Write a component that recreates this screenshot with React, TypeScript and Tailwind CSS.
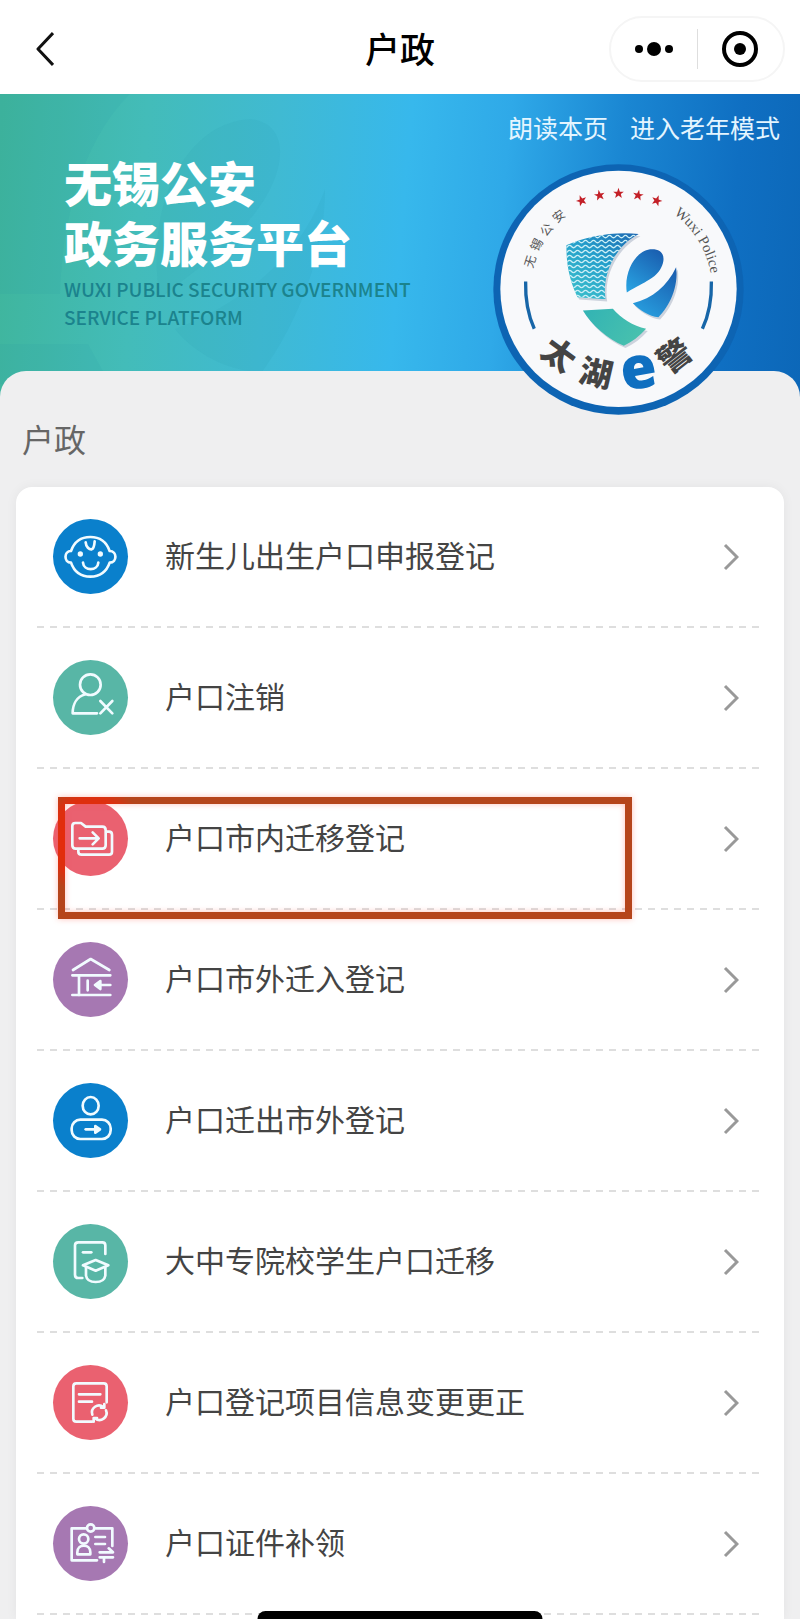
import type { ReactNode } from "react";

type Service = {
  label: string;
  color: string;
  icon: ReactNode;
  marked?: boolean;
};

const SERVICES: Service[] = [
  {
    label: "新生儿出生户口申报登记",
    color: "bg-[#0a80cc]",
    icon: (
      <>
        <path d="M54 96C64 68 84 54 112 54S160 68 170 96C193 96 193 131 170 131C160 160 138 173 112 173S64 160 54 131C32 131 32 96 54 96Z" />
        <path d="M98 70C99 84 109 92 116 91C122 89 124 80 125 67" />
        <path d="M90 131C92 157 134 157 136 131" />
        <circle cx="82" cy="105" r="4" fill="currentColor" />
        <circle cx="142" cy="105" r="4" fill="currentColor" />
      </>
    ),
  },
  {
    label: "户口注销",
    color: "bg-[#58b6a6]",
    icon: (
      <>
        <circle cx="112" cy="74" r="31" />
        <path d="M97 103C72 110 59 132 59 160H132" />
        <path d="M142 123L178 160M178 123L142 160" />
      </>
    ),
  },
  {
    label: "户口市内迁移登记",
    color: "bg-[#ea6170]",
    marked: true,
    icon: (
      <>
        <path d="M67 66H84L98 77H148Q158 77 158 88V133Q158 143 148 143H68Q58 143 58 133V75Q58 66 67 66Z" />
        <path d="M80 112H136M119 94L137 112L119 130" />
        <path d="M160 92H168Q177 92 177 101V152Q177 161 168 161H86Q76 161 76 152V146" />
      </>
    ),
  },
  {
    label: "户口市外迁入登记",
    color: "bg-[#a678b2]",
    icon: (
      <>
        <path d="M60 84L113 51L169 84M58 100H172M58 159H172" />
        <path d="M78 100V159M104 116V145M172 129H130" />
        <path d="M142 117L126 129L142 141Z" fill="currentColor" />
      </>
    ),
  },
  {
    label: "户口迁出市外登记",
    color: "bg-[#0a80cc]",
    icon: (
      <>
        <ellipse cx="113" cy="68" rx="24" ry="26" />
        <rect x="56" y="110" width="117" height="58" rx="26" />
        <path d="M98 139H130" />
        <path d="M127 129L141 139L127 149Z" fill="currentColor" />
      </>
    ),
  },
  {
    label: "大中专院校学生户口迁移",
    color: "bg-[#58b6a6]",
    icon: (
      <>
        <path d="M88 162H76Q66 162 66 152V64Q66 55 76 55H148Q157 55 157 64V90" />
        <path d="M90 85H115" />
        <path d="M90 124L128 108L166 124L128 140Z" />
        <path d="M99 130V155Q102 174 128 174T157 155V130" />
      </>
    ),
  },
  {
    label: "户口登记项目信息变更更正",
    color: "bg-[#ea6170]",
    icon: (
      <>
        <path d="M117 170H70Q61 170 61 161V64Q61 55 70 55H152Q161 55 161 64V112" />
        <path d="M78 88H142M78 110H117" />
        <path d="M118 149A21 21 0 0 1 151 126M159 136A21 21 0 0 1 126 160" />
        <path d="M154 117V128H144M122 170V159H132" />
      </>
    ),
  },
  {
    label: "户口证件补领",
    color: "bg-[#a678b2]",
    icon: (
      <>
        <path d="M132 163H56V67H98M128 67H178V120" />
        <circle cx="113" cy="66" r="11" />
        <circle cx="92" cy="99" r="14" />
        <path d="M73 145V139C73 112 112 112 112 139V145Z" />
        <path d="M127 93H156M127 114H156" />
        <path d="M140 139H180L167 127M180 154H140M153 154V168" />
      </>
    ),
  },
];

const STARS = [
  { x: 336, y: 332, r: -20 },
  { x: 390, y: 316, r: -10 },
  { x: 447, y: 310, r: 0 },
  { x: 506, y: 316, r: 10 },
  { x: 562, y: 332, r: 20 },
];

const SEAL_CHARS = [
  { char: "无", x: 183, y: 515, r: -72 },
  { char: "锡", x: 202, y: 465, r: -61 },
  { char: "公", x: 232, y: 420, r: -50 },
  { char: "安", x: 268, y: 380, r: -39 },
];

const WAVES = Array.from({ length: 13 }, (_, i) => 440 + i * 15);

function wavePath(y: number) {
  let d = `M270 ${y}`;
  for (let i = 0; i < 11; i++) d += "q6 -7 12 0t12 0";
  return d;
}

function Seal() {
  return (
    <svg viewBox="70 222 754 754" className="h-[251px] w-[251px]" role="img" aria-label="太湖e警">
      <defs>
        <linearGradient id="shield" x1="1" y1="0" x2="0.2" y2="1">
          <stop offset="0" stopColor="#1c5fae" />
          <stop offset="0.5" stopColor="#249fcb" />
          <stop offset="1" stopColor="#3cc0cc" />
        </linearGradient>
        <linearGradient id="bowl" x1="0.8" y1="0" x2="0.2" y2="1">
          <stop offset="0" stopColor="#1a5fb0" />
          <stop offset="1" stopColor="#28a0e0" />
        </linearGradient>
        <linearGradient id="tip" x1="0" y1="0" x2="1" y2="0.4">
          <stop offset="0" stopColor="#32b3b4" />
          <stop offset="1" stopColor="#47c0ae" />
        </linearGradient>
        <clipPath id="shieldClip">
          <path d="M290 466C350 440 430 424 508 432C440 466 396 550 408 628L324 622C303 580 290 530 290 466Z" />
        </clipPath>
        <path id="arc" d="M166 599A281 281 0 0 1 728 599" />
      </defs>

      <circle cx="447" cy="599" r="376" fill="#0d64b3" />
      <circle cx="447" cy="597" r="355" fill="#f8f9fb" />

      {STARS.map((s) => (
        <path
          key={s.x}
          transform={`translate(${s.x} ${s.y}) rotate(${s.r})`}
          d="M0 -17L4 -5H16L7 2L10 14L0 7L-10 14L-7 2L-16 -5H-4Z"
          fill="#c32027"
        />
      ))}

      {SEAL_CHARS.map((c) => (
        <text
          key={c.char}
          transform={`translate(${c.x} ${c.y}) rotate(${c.r})`}
          textAnchor="middle"
          y="12"
          fontSize="37"
          fill="#555"
          className="font-['Noto_Sans_CJK_SC',sans-serif]"
        >
          {c.char}
        </text>
      ))}
      <text fontSize="44" fill="#555" className="font-['Liberation_Serif',serif]">
        <textPath href="#arc" startOffset="70%">
          Wuxi Police
        </textPath>
      </text>

      <path d="M168 575Q166 655 194 717M726 575Q728 655 699 717" fill="none" stroke="#1766a8" strokeWidth="10" />

      <g fill="#cdd3dd" transform="translate(5 7)">
        <path d="M290 466C350 440 430 424 508 432C440 466 396 550 408 628L324 622C303 580 290 530 290 466Z" />
        <path d="M490 640C550 625 592 590 620 532C628 590 600 650 567 682C540 680 510 660 490 640Z" />
        <path d="M340 662L430 657C455 686 490 708 530 717C510 740 487 757 463 768C415 748 365 705 340 662Z" />
      </g>
      <g clipPath="url(#shieldClip)">
        <rect x="280" y="420" width="240" height="220" fill="url(#shield)" />
        {WAVES.map((y) => (
          <path key={y} d={wavePath(y)} fill="none" stroke="#c9edf5" strokeWidth="4" />
        ))}
      </g>
      <path
        d="M472 608C462 545 500 478 548 478C582 478 590 504 575 534C558 566 530 574 472 608Z"
        fill="url(#bowl)"
      />
      <path d="M490 640C550 625 592 590 620 532C628 590 600 650 567 682C540 680 510 660 490 640Z" fill="url(#bowl)" />
      <path
        d="M340 662L430 657C455 686 490 708 530 717C510 740 487 757 463 768C415 748 365 705 340 662Z"
        fill="url(#tip)"
      />

      <g
        fill="#444"
        fontSize="98"
        fontWeight="900"
        textAnchor="middle"
        className="font-['Noto_Sans_CJK_SC',sans-serif]"
      >
        <text transform="translate(268 795) rotate(36)" y="36">
          太
        </text>
        <text transform="translate(380 850) rotate(13)" y="36">
          湖
        </text>
        <text transform="translate(615 798) rotate(-38)" y="36">
          警
        </text>
      </g>
      <text
        transform="translate(508 848) rotate(-10)"
        y="48"
        fontSize="176"
        fontWeight="800"
        textAnchor="middle"
        fill="#0f6fc0"
        className="font-['Open_Sans',sans-serif]"
      >
        e
      </text>
    </svg>
  );
}

function Header() {
  return (
    <header className="grid h-[94px] grid-cols-[1fr_auto_1fr] items-center bg-white pt-1">
      <div className="pl-8">
        <button aria-label="返回" className="block p-1">
          <svg viewBox="0 0 18 36" className="h-9 w-[18px]" fill="none" stroke="#111" strokeWidth="3">
            <path d="M17 2L2 18L17 34" strokeLinejoin="round" />
          </svg>
        </button>
      </div>
      <h1 className="pb-1 text-[35px] font-medium leading-none text-black">户政</h1>
      <div className="flex justify-end pr-[15px]">
        <div className="flex h-[66px] w-[176px] items-center rounded-full border-2 border-[#f5f5f5] bg-white">
          <button aria-label="更多" className="flex flex-1 items-center justify-center gap-1">
            <span className="size-2 rounded-full bg-black" />
            <span className="size-[14px] rounded-full bg-black" />
            <span className="size-2 rounded-full bg-black" />
          </button>
          <span className="h-10 w-px bg-[#dedede]" />
          <button aria-label="关闭" className="flex flex-1 items-center justify-center">
            <span className="flex size-9 items-center justify-center rounded-full border-4 border-black">
              <span className="size-3 rounded-full bg-black" />
            </span>
          </button>
        </div>
      </div>
    </header>
  );
}

function Banner() {
  return (
    <section className="relative flex h-[309px] justify-between bg-[linear-gradient(95deg,#3fb59b_0%,#43bcb9_18%,#40bad2_34%,#37b8ec_50%,#2fa9e8_62%,#1a86d2_76%,#0f6fc2_90%,#0c67b8_100%)]">
      <svg
        viewBox="0 0 340 290"
        className="absolute left-0 top-0 h-[290px] w-[340px]"
        fill="#1c91a5"
        fillOpacity="0.09"
        aria-hidden="true"
      >
        <path d="M0 0H130C80 50 62 130 60 200H0Z" />
        <path d="M160 205C145 120 180 30 250 25C295 30 285 85 250 125C225 160 190 178 160 205Z" />
        <path d="M175 235C240 210 300 165 325 95C325 170 290 240 262 278C225 278 190 255 175 235Z" />
        <path d="M0 250H88L110 290H0Z" />
      </svg>
      <div className="relative pl-16 pt-[57px]">
        <h2 className="text-[48px] font-black leading-[60px] text-white">
          无锡公安
          <br />
          政务服务平台
        </h2>
        <p className="mt-1 text-[19px] font-medium leading-7 text-[#1b838d]">
          WUXI PUBLIC SECURITY GOVERNMENT
          <br />
          SERVICE PLATFORM
        </p>
      </div>
      <nav className="relative flex gap-[22px] pr-5 pt-[15px] text-[25px] leading-9 text-[#e4f5ff]">
        <a href="#read">朗读本页</a>
        <a href="#elder">进入老年模式</a>
      </nav>
      <div className="absolute right-14 top-[70px] z-10">
        <Seal />
      </div>
    </section>
  );
}

/* Red frame drawn over a row, brighter where it crosses the icon */
function Marker() {
  return (
    <svg
      viewBox="0 0 574 122"
      className="pointer-events-none absolute left-[42px] top-[28px] z-10 h-[122px] w-[574px] drop-shadow-[0_0_3px_rgba(255,80,60,0.35)]"
      fill="none"
      aria-hidden="true"
    >
      <defs>
        <radialGradient id="mark" gradientUnits="userSpaceOnUse" cx="33" cy="42" r="56">
          <stop offset="0.5" stopColor="#e42c0c" />
          <stop offset="0.75" stopColor="#dc300f" />
          <stop offset="1" stopColor="#b5451b" />
        </radialGradient>
      </defs>
      <rect x="3.5" y="3.5" width="567" height="115" stroke="url(#mark)" strokeWidth="7" />
    </svg>
  );
}

function ServiceRow({ service }: { service: Service }) {
  return (
    <li className="relative px-[21px]">
      <a href="#service" className="flex h-[139px] items-center pl-4 pr-6">
        <span className={`size-[75px] shrink-0 rounded-full text-[#f1fbff] ${service.color}`}>
          <svg
            viewBox="0 0 225 225"
            className="size-full"
            fill="none"
            stroke="currentColor"
            strokeWidth="8"
            strokeLinecap="round"
            strokeLinejoin="round"
            aria-hidden="true"
          >
            {service.icon}
          </svg>
        </span>
        <span className="flex-1 pb-[6px] pl-[37px] text-[30px] leading-none text-[#444]">{service.label}</span>
        <svg viewBox="0 0 16 28" className="h-7 w-4" fill="none" stroke="#999" strokeWidth="3" aria-hidden="true">
          <path d="M2 2L14 14L2 26" />
        </svg>
      </a>
      <div className="h-[2px] bg-[repeating-linear-gradient(90deg,#dedede_0px,#dedede_7px,transparent_7px,transparent_13px)]" />
      {service.marked && <Marker />}
    </li>
  );
}

export default function App() {
  return (
    <div className="flex min-h-screen flex-col bg-[#efeff0] font-['Noto_Sans_CJK_SC',sans-serif]">
      <Header />
      <Banner />
      <main className="relative -mt-8 flex flex-1 flex-col rounded-t-[26px] bg-[#efeff0] px-4">
        <h2 className="px-[6px] pb-[31px] pt-[49px] text-[32px] leading-9 text-[#666]">户政</h2>
        <ul className="flex-1 rounded-t-2xl bg-white shadow-[0_0_12px_rgba(0,0,0,0.05)]">
          {SERVICES.map((s) => (
            <ServiceRow key={s.label} service={s} />
          ))}
        </ul>
      </main>
      <div className="fixed bottom-0 left-1/2 z-20 h-2 w-[285px] -translate-x-1/2 rounded-t-lg bg-black" />
    </div>
  );
}
